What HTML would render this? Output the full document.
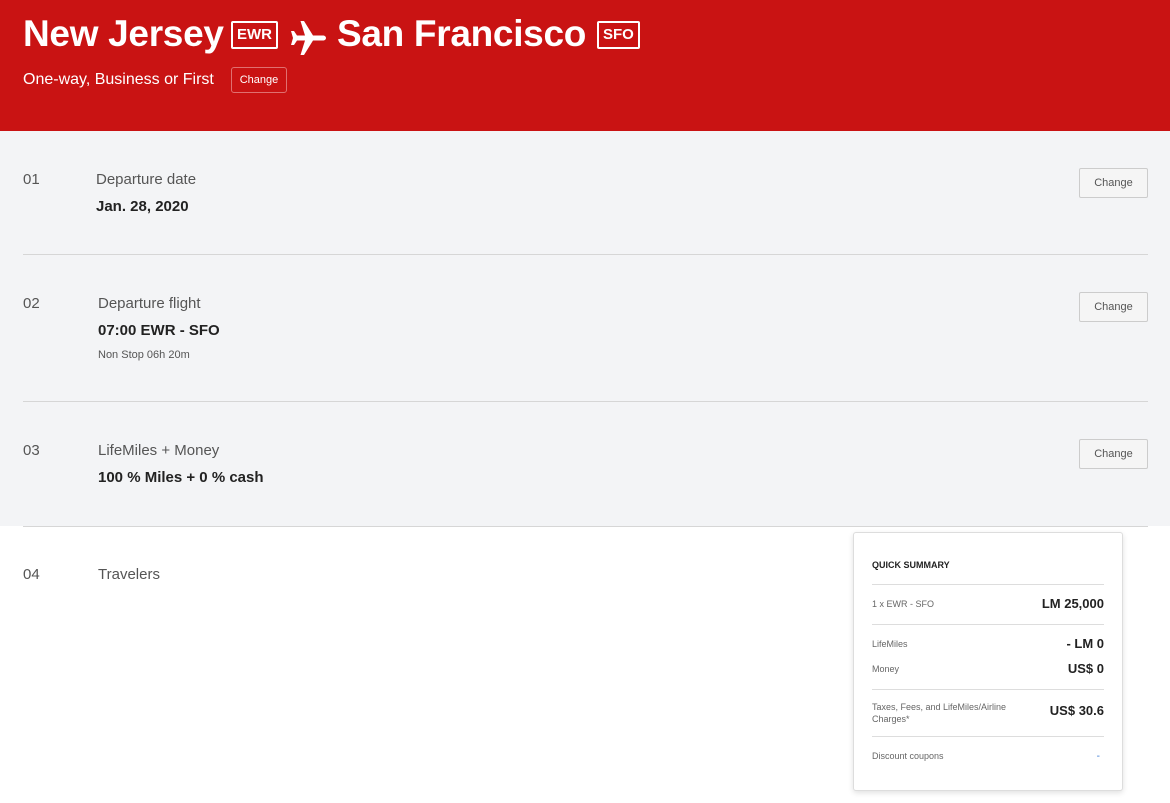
<!DOCTYPE html>
<html><head><style>
body{margin:0;width:1170px;height:803px;overflow:hidden;background:#fff;font-family:"Liberation Sans",sans-serif;position:relative}
.hdr{position:absolute;left:0;top:0;width:1170px;height:131px;background:#c91313;color:#fff}
.t{position:absolute;top:13px;font-size:37px;font-weight:bold;letter-spacing:-0.3px}
.code{position:absolute;top:21px;border:2px solid #fff;font-size:15px;font-weight:bold;padding:3px 4px;line-height:18px;border-radius:2px}
.sub{position:absolute;left:23px;top:71px;font-size:16px}
.hbtn{position:absolute;left:231px;top:67px;width:54px;height:24px;border:1px solid #e07070;border-radius:3px;font-size:11px;text-align:center;line-height:24px}
.grey{position:absolute;left:0;top:131px;width:1170px;height:395px;background:#f3f4f6}
.num{position:absolute;left:23px;font-size:15px;color:#555}
.lab{position:absolute;font-size:15px;color:#555}
.val{position:absolute;font-size:15px;font-weight:bold;color:#222}
.sm{position:absolute;font-size:11px;color:#555}
.hr{position:absolute;left:23px;width:1125px;height:1px;background:#d6d6d6}
.btn{position:absolute;left:1079px;width:67px;height:28px;border:1px solid #ccc;border-radius:2px;background:#f5f5f5;font-size:11px;color:#555;text-align:center;line-height:28px}
.card{position:absolute;left:853px;top:532px;width:268px;height:257px;background:#fff;border:1px solid #ddd;border-radius:3px;box-shadow:0 2px 6px rgba(0,0,0,.12);font-size:9px;color:#666}
.card .r{position:absolute;left:18px;right:18px}
.card b{position:absolute;right:0;font-size:13px;color:#222}
.card .l{position:absolute;left:18px;right:18px;height:1px;background:#ddd}
</style></head><body>
<div class="hdr">
<div class="t" style="left:23px">New Jersey</div>
<div class="code" style="left:231px">EWR</div>
<svg style="position:absolute;left:290px;top:20px" width="37" height="36" viewBox="0 0 37 36"><path fill="#fff" d="M36 18c0-1.5-1.5-2.5-3-2.5H23L14 1h-3.5l4.5 14.5H7L4 11H1l2 7-2 7h3l3-4.5h8L10.5 35H14l9-14.5h10c1.5 0 3-1 3-2.5z"/></svg>
<div class="t" style="left:337px">San Francisco</div>
<div class="code" style="left:597px">SFO</div>
<div class="sub">One-way, Business or First</div>
<div class="hbtn">Change</div>
</div>
<div class="grey"></div>
<div class="num" style="top:171px">01</div>
<div class="lab" style="left:96px;top:171px">Departure date</div>
<div class="val" style="left:96px;top:198px">Jan. 28, 2020</div>
<div class="btn" style="top:168px">Change</div>
<div class="hr" style="top:254px"></div>
<div class="num" style="top:295px">02</div>
<div class="lab" style="left:98px;top:295px">Departure flight</div>
<div class="val" style="left:98px;top:322px">07:00 EWR - SFO</div>
<div class="sm" style="left:98px;top:349px">Non Stop 06h 20m</div>
<div class="btn" style="top:292px">Change</div>
<div class="hr" style="top:401px"></div>
<div class="num" style="top:442px">03</div>
<div class="lab" style="left:98px;top:442px">LifeMiles + Money</div>
<div class="val" style="left:98px;top:469px">100 % Miles + 0 % cash</div>
<div class="btn" style="top:439px">Change</div>
<div class="hr" style="top:526px"></div>
<div class="num" style="top:566px">04</div>
<div class="lab" style="left:98px;top:566px">Travelers</div>
<div class="card">
<div class="r" style="top:27px;font-weight:bold;color:#222">QUICK SUMMARY</div>
<div class="l" style="top:51px"></div>
<div class="r" style="top:66px">1 x EWR - SFO<b style="top:-3px">LM 25,000</b></div>
<div class="l" style="top:91px"></div>
<div class="r" style="top:106px">LifeMiles<b style="top:-3px">- LM 0</b></div>
<div class="r" style="top:131px">Money<b style="top:-3px">US$ 0</b></div>
<div class="l" style="top:156px"></div>
<div class="r" style="top:168px;line-height:12px">Taxes, Fees, and LifeMiles/Airline<br>Charges*<b style="top:4px">US$ 30.6</b></div>
<div class="l" style="top:203px"></div>
<div class="r" style="top:218px">Discount coupons<b style="top:0px;color:#3a7bd5;font-weight:normal;font-size:10px;right:4px">-</b></div>
</div>
</body></html>
